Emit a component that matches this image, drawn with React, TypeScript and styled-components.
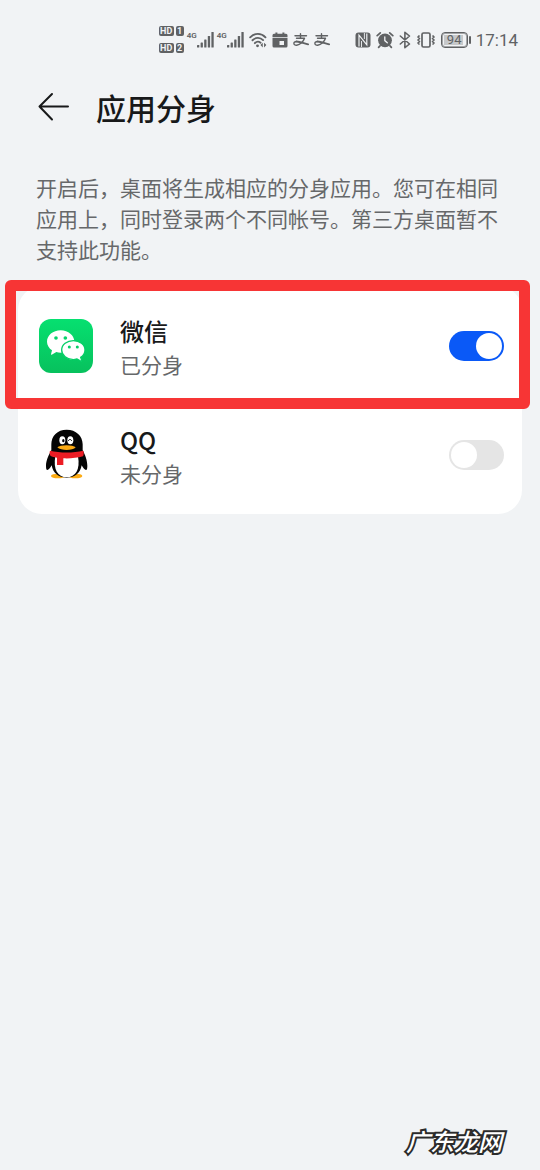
import React from "react";
import styled, { createGlobalStyle } from "styled-components";

const ink = "#606264";

const GlobalStyle = createGlobalStyle`
  *, *::before, *::after { box-sizing: border-box; }
  body {
    margin: 0;
    background: #f1f3f5;
    color: #18191a;
    font-family: "Noto Sans CJK SC", "Noto Sans", sans-serif;
  }
`;

const Page = styled.div`
  min-height: 100vh;
  display: flex;
  flex-direction: column;
`;

const StatusBar = styled.div`
  display: flex;
  align-items: center;
  justify-content: flex-end;
  gap: 25px;
  height: 79px;
  padding: 0 22px 0 16px;
  color: ${ink};
`;

const StatusGroup = styled.div<{ $gap: number }>`
  display: flex;
  align-items: center;
  gap: ${(p) => p.$gap}px;
`;

const SimGrid = styled.div`
  display: grid;
  grid-template-columns: 15px 8px;
  gap: 7px 2px;
`;

const SimBadge = styled.span`
  height: 10px;
  border-radius: 2px;
  background: ${ink};
  color: #f1f3f5;
  font: 700 9px/10px Roboto, sans-serif;
  text-align: center;
`;

const Signal = styled.div`
  display: flex;
  align-items: flex-start;
`;

const Network = styled.span`
  width: 9px;
  font: 600 8px/8px Roboto, sans-serif;
  text-indent: -1px;
`;

const Battery = styled.div`
  display: flex;
  align-items: center;
  gap: 1px;
`;

const BatteryBody = styled.span`
  width: 27px;
  height: 16px;
  padding: 1px;
  border: 1px solid ${ink};
  border-radius: 4px;
  box-shadow: inset 0 0 0 1px #a3a5a7;
  background: linear-gradient(#c6c8ca, #c6c8ca) 2px 2px / 19px 10px no-repeat;
  font: 400 13px/12px Roboto, sans-serif;
  text-align: center;
`;

const BatteryTip = styled.span`
  width: 2px;
  height: 8px;
  border-radius: 1px;
  background: ${ink};
`;

const Clock = styled.time`
  font: 400 17px/20px Roboto, sans-serif;
`;

const Header = styled.header`
  display: flex;
  align-items: center;
  gap: 26px;
  padding: 6px 36px;
`;

const BackButton = styled.button`
  display: flex;
  padding: 0;
  border: 0;
  background: none;
  color: inherit;
`;

const Title = styled.h1`
  margin: 0;
  font-size: 30px;
  line-height: 44px;
  font-weight: 500;
`;

const Description = styled.p`
  margin: 0;
  padding: 37px 36px 21px;
  color: #66686a;
  font-size: 21px;
  line-height: 31px;
`;

const Card = styled.ul`
  margin: 0 18px;
  padding: 5px 0;
  list-style: none;
  border-radius: 24px;
  background: #fff;
`;

const Row = styled.li`
  position: relative;
  display: flex;
  align-items: center;
  gap: 27px;
  height: 109px;
  padding: 0 18px 0 21px;
`;

const RowText = styled.div`
  flex: 1;
  display: flex;
  flex-direction: column;
  padding-top: 2px;
`;

const AppName = styled.label`
  font-size: 24px;
  line-height: 34px;
  font-weight: 500;
`;

const AppState = styled.span`
  color: #66686a;
  font-size: 21px;
  line-height: 32px;
`;

const Switch = styled.input`
  appearance: none;
  display: flex;
  align-items: center;
  justify-content: flex-start;
  width: 55px;
  height: 30px;
  margin: 0;
  padding: 0 2px;
  border-radius: 15px;
  background: #e5e5e5;

  &::before {
    content: "";
    width: 26px;
    height: 26px;
    border-radius: 50%;
    background: #fff;
  }

  &:checked {
    justify-content: flex-end;
    background: #0a59f7;
  }
`;

const Highlight = styled.span`
  position: absolute;
  inset: -11px -8px -9px -13px;
  border: 11px solid #f73535;
  border-radius: 6px;
  pointer-events: none;
`;

const Footer = styled.footer`
  margin-top: auto;
  padding: 0 38px 12px;
  text-align: right;
  color: #fff;
  font-size: 24px;
  line-height: 34px;
  font-weight: 500;
  font-style: italic;
  -webkit-text-stroke: 4px #2b2b2b;
  paint-order: stroke fill;
`;

const Bars = () => (
  <svg width="17" height="16" viewBox="0 0 17 16" fill="currentColor">
    <rect x="0" y="13" width="2.3" height="2.5" rx=".5" />
    <rect x="3.6" y="10.5" width="2.3" height="5" rx=".5" />
    <rect x="7.2" y="7.5" width="2.3" height="8" rx=".5" />
    <rect x="10.8" y="4" width="2.3" height="11.5" rx=".5" />
    <rect x="14.4" y="0" width="2.3" height="15.5" rx=".5" />
  </svg>
);

const WifiIcon = () => (
  <svg width="18" height="18" viewBox="0 0 19 18" fill="none" stroke="currentColor" strokeWidth="2" strokeLinecap="round">
    <path d="M1.2 6.2C6 1.3 12.8 1.3 17.4 6.2" />
    <path d="M3.7 9.3c3.4-3.4 8-3.4 11.2-.2" />
    <path d="M6.2 12.3c1.8-1.8 4.2-1.9 6-.5" />
    <circle cx="9" cy="15.2" r="1.5" fill="currentColor" stroke="none" />
    <path d="M14.5 11.8v5l-2.4-2.500zM15.900 11.800v5l2.400-2.500z" fill="currentColor" stroke="none" />
  </svg>
);

const CalendarIcon = () => (
  <svg width="16" height="16" viewBox="0 0 16 16" fill="currentColor">
    <path d="M2 1.8h1.4V.4h2v1.4h5V.4h2v1.4H14a1.5 1.5 0 0 1 1.5 1.5v1.7H.5V3.3A1.5 1.5 0 0 1 2 1.8z" />
    <path fillRule="evenodd" d="M.5 5.800h15V14a1.500 1.500 0 0 1-1.500 1.500H2A1.500 1.500 0 0 1 .5 14zM7.500 9v4h4.500V9z" />
  </svg>
);

const PayIcon = () => (
  <svg width="16" height="14" viewBox="0 0 16 14" fill="none" stroke="currentColor" strokeWidth="1.4" strokeLinecap="round" strokeLinejoin="round">
    <path d="M7.5 .8V5M2 2.700h11.500M3.500 5.300h8C10.500 8.300 7.300 12 3.700 12.200c-3.700 .2-3.700-3.700-.2-3.700" />
    <path d="M3.500 8.500c3.500 0 7 1.700 11.700 2.900" strokeWidth="1.800" />
  </svg>
);

const NfcIcon = () => (
  <svg width="16" height="16" viewBox="0 0 16 16">
    <rect x=".5" y=".5" width="15" height="15" rx="3" fill={ink} />
    <path d="M4 14.500V3.200l7.800 9.600V1.500" fill="none" stroke="#f1f3f5" strokeWidth="1.200" />
    <path d="M6.500 15V9M9.400 1v6" fill="none" stroke="#f1f3f5" strokeWidth=".9" />
  </svg>
);

const AlarmIcon = () => (
  <svg width="18" height="18" viewBox="0 0 18 18" fill="none" strokeLinecap="round">
    <circle cx="9" cy="9.3" r="6.9" fill={ink} />
    <path d="M1.2 4.7 4.3 1.8M16.8 4.7l-3.1-2.9M4 14.8l-1.4 1.5M14 14.8l1.4 1.5" stroke={ink} strokeWidth="1.7" />
    <path d="M8.8 5.8v3.800l2.500 2.200" stroke="#f1f3f5" strokeWidth="1.300" />
  </svg>
);

const BluetoothIcon = () => (
  <svg width="12" height="18" viewBox="0 0 12 18" fill="none" stroke="currentColor" strokeWidth="1.6" strokeLinejoin="round" strokeLinecap="round">
    <path d="m1.3 5 9.2 8-4.6 3.7V1.3L10.5 5l-9.2 8" />
  </svg>
);

const VibrateIcon = () => (
  <svg width="20" height="16" viewBox="0 0 20 16" fill="none" stroke="currentColor" strokeWidth="1.7" strokeLinejoin="round">
    <rect x="6" y="1" width="8" height="14" rx="1.5" />
    <path d="M3.5 3.5 2 5l1.5 1.5L2 8l1.5 1.5L2 11l1.5 1.5M16.5 3.5 18 5l-1.5 1.5L18 8l-1.5 1.5L18 11l-1.5 1.5" />
  </svg>
);

const BackIcon = () => (
  <svg width="34" height="30" viewBox="0 0 34 30" fill="none" stroke="currentColor" strokeWidth="2" strokeLinecap="round" strokeLinejoin="round">
    <path d="M16 2 3.5 14.5 16 27.5M3.5 14.5H32" />
  </svg>
);

const WeChatIcon = () => (
  <svg width="54" height="54" viewBox="0 0 162 162">
    <defs>
      <linearGradient id="wechat-green" x1="0" y1="0" x2="0" y2="1">
        <stop offset="0" stopColor="#06e070" />
        <stop offset="1" stopColor="#07c15d" />
      </linearGradient>
    </defs>
    <rect width="162" height="162" rx="36" fill="url(#wechat-green)" />
    <path
      d="M65 34c-23 0-41 15-41 34 0 10 6 20 15 26l-3 12c0 1 1 2 2 1l14-8c4 1 8 2 13 2 23 0 41-15 41-33S88 34 65 34z"
      fill="#fff"
    />
    <g fill="#06d36a">
      <circle cx="51" cy="57" r="5.5" />
      <circle cx="79" cy="57" r="5.5" />
    </g>
    <path
      d="M103 65c-19 0-35 12-35 28s16 29 35 29c4 0 8-1 11-2l11 6c2 1 3 0 3-2l-3-9c8-5 13-13 13-22 0-16-16-28-35-28z"
      fill="#fff"
      stroke="#06cf67"
      strokeWidth="4"
    />
    <g fill="#06cd66">
      <circle cx="91" cy="84" r="4.5" />
      <circle cx="115" cy="84" r="4.5" />
    </g>
  </svg>
);

const QQIcon = () => (
  <svg width="54" height="54" viewBox="27 39 162 162">
    <ellipse cx="84" cy="183" rx="21" ry="7" fill="#fcab14" />
    <ellipse cx="136" cy="183" rx="21" ry="7" fill="#fcab14" />
    <path
      d="M110 44c-28 0-46 19-46 44v18c-7 12-16 31-16 46 0 8 1 13 4 13 4 0 9-6 13-14 4 23 20 37 45 37s41-14 45-37c4 8 9 14 13 14 3 0 4-5 4-13 0-15-7-34-14-46V88c0-25-20-44-48-44z"
      fill="#050505"
    />
    <path d="M76 124c-7 40 7 63 34 63s41-23 34-63z" fill="#fff" />
    <path d="M60 107c30 7 70 7 100 0 2 6 1 14-1 17-18 5-40 7-59 6v20H81v-22c-8-1-15-3-19-5-3-4-4-11-2-16z" fill="#ec1c24" />
    <ellipse cx="97" cy="76" rx="9" ry="12" fill="#fff" />
    <ellipse cx="121" cy="76" rx="9" ry="12" fill="#fff" />
    <ellipse cx="100" cy="77" rx="3.5" ry="5" fill="#050505" />
    <path d="M115 78c1-6 9-6 10 0" fill="none" stroke="#050505" strokeWidth="3" />
    <path d="M82 97c8-8 47-8 55 0-8 10-44 11-55 0z" fill="#fcab14" />
  </svg>
);

type AppEntry = {
  id: string;
  name: string;
  state: string;
  cloned: boolean;
  highlighted: boolean;
  icon: React.ReactNode;
};

const apps: AppEntry[] = [
  { id: "wechat", name: "微信", state: "已分身", cloned: true, highlighted: true, icon: <WeChatIcon /> },
  { id: "qq", name: "QQ", state: "未分身", cloned: false, highlighted: false, icon: <QQIcon /> },
];

export default function App() {
  return (
    <Page lang="zh-CN">
      <GlobalStyle />
      <StatusBar>
        <StatusGroup $gap={5}>
          <StatusGroup $gap={4}>
            <SimGrid>
              <SimBadge>HD</SimBadge>
              <SimBadge>1</SimBadge>
              <SimBadge>HD</SimBadge>
              <SimBadge>2</SimBadge>
            </SimGrid>
            <Signal>
              <Network>4G</Network>
              <Bars />
            </Signal>
            <Signal>
              <Network>4G</Network>
              <Bars />
            </Signal>
          </StatusGroup>
          <WifiIcon />
          <CalendarIcon />
          <PayIcon />
          <PayIcon />
        </StatusGroup>
        <StatusGroup $gap={5}>
          <NfcIcon />
          <AlarmIcon />
          <BluetoothIcon />
          <VibrateIcon />
          <Battery>
            <BatteryBody>94</BatteryBody>
            <BatteryTip />
          </Battery>
          <Clock>17:14</Clock>
        </StatusGroup>
      </StatusBar>
      <Header>
        <BackButton type="button" aria-label="返回">
          <BackIcon />
        </BackButton>
        <Title>应用分身</Title>
      </Header>
      <Description>
        开启后，桌面将生成相应的分身应用。您可在相同应用上，同时登录两个不同帐号。第三方桌面暂不支持此功能。
      </Description>
      <Card>
        {apps.map((app) => (
          <Row key={app.id}>
            {app.icon}
            <RowText>
              <AppName htmlFor={app.id}>{app.name}</AppName>
              <AppState>{app.state}</AppState>
            </RowText>
            <Switch type="checkbox" role="switch" id={app.id} defaultChecked={app.cloned} />
            {app.highlighted && <Highlight />}
          </Row>
        ))}
      </Card>
      <Footer>广东龙网</Footer>
    </Page>
  );
}
